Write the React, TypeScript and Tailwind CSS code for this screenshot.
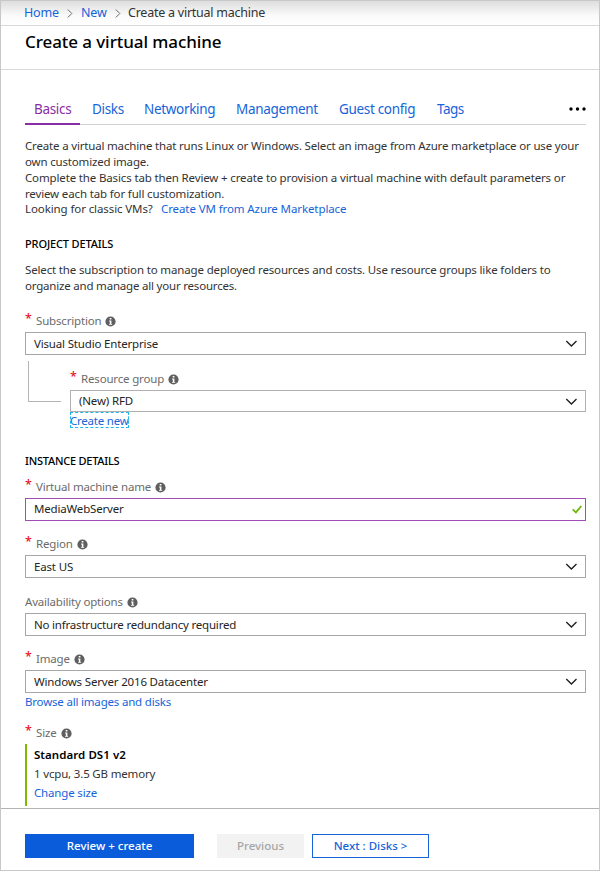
import React from 'react';

function Info() {
  return (
    <svg className="block h-[11px] w-[11px] shrink-0" viewBox="0 0 11 11">
      <circle cx="5.5" cy="5.5" r="5.1" fill="#5f5f5f" />
      <path d="M4.7 1.9h1.7v1.5H4.7zM4.1 4.5h2.3v3.4h.8v.9H4v-.9h.8V5.4h-.7z" fill="#fff" />
    </svg>
  );
}

function Chevron() {
  return (
    <svg className="block h-[7px] w-[12px] shrink-0" viewBox="0 0 12 7">
      <path d="M1.3 1 6.4 6 11.5 1" fill="none" stroke="#1e1e1e" strokeWidth="1.35" />
    </svg>
  );
}

function Crumb() {
  return (
    <svg className="block h-[9px] w-[6px] shrink-0" viewBox="0 0 6 9">
      <path d="M.8.5 4.8 4.5.8 8.5" fill="none" stroke="#6a6a6a" strokeWidth="1" />
    </svg>
  );
}

function Label({ text, required = true }: { text: string; required?: boolean }) {
  return (
    <div className="flex h-[18px] items-center leading-[18px] text-[#6b6b6b]">
      {required && <span className="mb-[4px] w-[11px] shrink-0 text-[12.5px] font-medium text-[#e81123]">*</span>}
      <span>{text}</span>
      <span className="mt-[1px] ml-[4px]">
        <Info />
      </span>
    </div>
  );
}

function Select({ text }: { text: string }) {
  return (
    <div className="flex h-[23px] items-center justify-between border border-[#a6a6a6] pr-[8px] pl-[8px] text-[#252525]">
      <span>{text}</span>
      <Chevron />
    </div>
  );
}

export default function App() {
  return (
    <div className="flex h-[871px] w-[600px] flex-col overflow-hidden border border-[#c8c8c8] bg-white font-['Noto_Sans','Open_Sans',sans-serif] text-[11.5px] whitespace-nowrap text-[#333]">
      <nav className="flex h-[25px] shrink-0 items-center border-b border-[#d9d9d9] bg-linear-to-b from-[#dedede] via-[#fafafa] via-60% to-white pl-[23px] text-[12.5px] leading-[22px]">
        <a className="w-[34px] tracking-[-0.2px] text-[#1664d9]">Home</a>
        <span className="ml-[9px]"><Crumb /></span>
        <a className="ml-[8px] w-[25px] tracking-[-0.2px] text-[#1664d9]">New</a>
        <span className="ml-[9px]"><Crumb /></span>
        <span className="ml-[7px] tracking-[-0.24px]">Create a virtual machine</span>
      </nav>
      <header className="h-[44px] shrink-0 border-b border-[#d9d9d9] pl-[24px]">
        <h1 className="text-[17px] leading-[32px] font-medium tracking-[-0.08px] text-black">Create a virtual machine</h1>
      </header>

      <main className="flex h-[738px] shrink-0 flex-col pr-[13px] pl-[24px] tracking-[-0.17px]">
        <div className="mt-[27px] flex h-[28px] shrink-0 items-start border-b border-[#d0d0d0] text-[13.5px] leading-[24px] tracking-[-0.32px] text-[#1664d9]">
          <span className="h-[28px] w-[55px] shrink-0 border-b-2 border-[#8a2da5] pl-[9px] text-[#8a2da5]">Basics</span>
          <span className="w-[52px] pl-[12px]">Disks</span>
          <span className="w-[92px] pl-[12px]">Networking</span>
          <span className="w-[103px] pl-[12px]">Management</span>
          <span className="w-[98px] pl-[12px]">Guest config</span>
          <span className="pl-[12px] tracking-[-0.5px]">Tags</span>
          <svg className="mt-[10px] ml-auto h-[4px] w-[17px]" viewBox="0 0 17 4">
            <circle cx="2" cy="2" r="1.7" />
            <circle cx="8.5" cy="2" r="1.7" />
            <circle cx="15" cy="2" r="1.7" />
          </svg>
        </div>

        <div className="mt-[13px] h-[79px] shrink-0 leading-[15.85px]">
          <p className="tracking-[-0.175px]">Create a virtual machine that runs Linux or Windows. Select an image from Azure marketplace or use your</p>
          <p>own customized image.</p>
          <p className="tracking-[-0.145px]">Complete the Basics tab then Review + create to provision a virtual machine with default parameters or</p>
          <p className="tracking-[-0.145px]">review each tab for full customization.</p>
          <p className="flex tracking-[-0.1px]">
            <span className="w-[136px]">Looking for classic VMs?</span>
            <a className="text-[#1664d9]">Create VM from Azure Marketplace</a>
          </p>
        </div>

        <h2 className="mt-[19px] h-[16px] shrink-0 text-[11px] leading-[16px] font-medium tracking-[-0.13px] text-black">PROJECT DETAILS</h2>
        <div className="mt-[10px] h-[32px] shrink-0 leading-[16px]">
          <p className="tracking-[-0.15px]">Select the subscription to manage deployed resources and costs. Use resource groups like folders to</p>
          <p className="tracking-[-0.2px]">organize and manage all your resources.</p>
        </div>

        <div className="mt-[18px] flex flex-col gap-[2px]">
          <Label text="Subscription" />
          <Select text="Visual Studio Enterprise" />
        </div>

        <div className="flex">
          <div className="mt-[6px] ml-[3px] h-[41px] w-[33px] shrink-0 border-b border-l border-[#b4b4b4]" />
          <div className="ml-[9px] grow pt-[15px]">
            <Label text="Resource group" />
            <div className="mt-[2px] flex h-[22px] items-center justify-between border border-[#b0b0b0] pr-[8px] pl-[8px] text-[#252525]">
              <span>(New) RFD</span>
              <Chevron />
            </div>
            <a className="block h-[16px] w-[59px] leading-[17px] tracking-[-0.22px] text-[#1664d9] outline-1 -outline-offset-1 outline-[#1fb6ee] outline-dashed">Create new</a>
          </div>
        </div>

        <h2 className="mt-[25px] h-[16px] shrink-0 text-[11px] leading-[16px] font-medium tracking-[-0.24px] text-black">INSTANCE DETAILS</h2>
        <div className="mt-[9px] flex flex-col gap-[2px]">
          <Label text="Virtual machine name" />
          <div className="flex h-[23px] items-center justify-between border border-[#a04db8] pr-[3px] pb-px pl-[8px] text-[#252525]">
            <span>MediaWebServer</span>
            <svg className="block h-[9px] w-[10px]" viewBox="0 0 10 9">
              <path d="M.7 4.4 3.9 7.4 9.3 1" fill="none" stroke="#6fb908" strokeWidth="1.8" />
            </svg>
          </div>
        </div>
        <div className="mt-[14px] flex flex-col gap-[2px]">
          <Label text="Region" />
          <Select text="East US" />
        </div>
        <div className="mt-[15px] flex flex-col gap-[2px] tracking-[-0.2px]">
          <Label text="Availability options" required={false} />
          <Select text="No infrastructure redundancy required" />
        </div>
        <div className="mt-[14px] flex flex-col gap-[2px]">
          <Label text="Image" />
          <Select text="Windows Server 2016 Datacenter" />
        </div>
        <a className="block h-[16px] shrink-0 leading-[17px] tracking-[-0.19px] text-[#1664d9]">Browse all images and disks</a>
        <div className="mt-[15px]">
          <Label text="Size" />
          <div className="mt-[2px] flex h-[62px] flex-col border-l-2 border-[#7fba00] pt-[1px] pl-[7px] leading-[19px]">
            <strong className="font-semibold tracking-[0.05px] text-black">Standard DS1 v2</strong>
            <span>1 vcpu, 3.5 GB memory</span>
            <a className="text-[#1664d9]">Change size</a>
          </div>
        </div>
      </main>

      <footer className="flex grow border-t border-[#b3b3b3] pt-[25px] pl-[24px] text-[11.5px] leading-[24px] font-medium">
        <button className="h-[24px] w-[169px] bg-[#0a5cdb] text-white">Review + create</button>
        <button className="ml-[23px] h-[24px] w-[87px] bg-[#f2f2f2] text-[#a6a6a6]">Previous</button>
        <button className="ml-[8px] h-[24px] w-[117px] border border-[#1664d9] leading-[22px] text-[#1664d9]">Next : Disks &gt;</button>
      </footer>
    </div>
  );
}
